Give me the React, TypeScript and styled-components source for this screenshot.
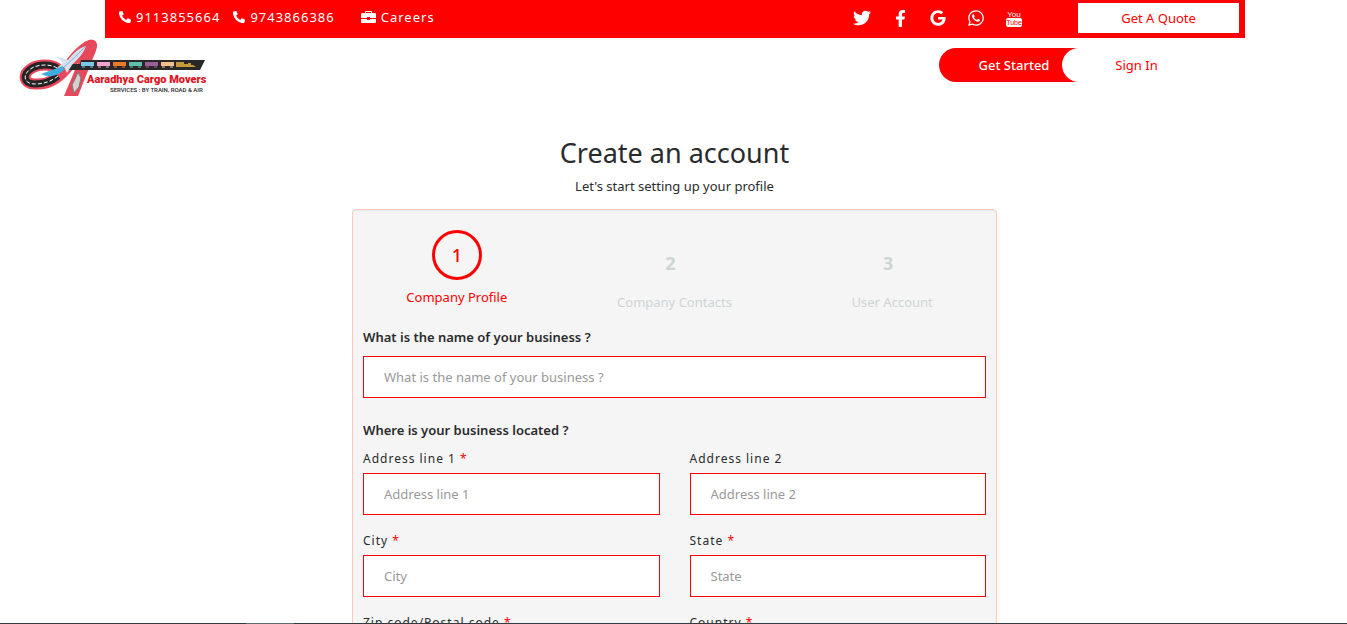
import React from "react";
import styled, { createGlobalStyle } from "styled-components";
import { FaTwitter, FaFacebookF, FaGoogle, FaWhatsapp, FaPhoneAlt } from "react-icons/fa";

const GlobalStyle = createGlobalStyle`
  * { box-sizing: border-box; }
  html { scrollbar-width: none; }
  body {
    margin: 0;
    background: #fff;
    color: #292b2c;
    font-family: "Noto Sans", "Open Sans", sans-serif;
    font-size: 13px;
    line-height: 20px;
  }
`;

const Header = styled.header`
  padding-left: 3px;
`;

const TopBar = styled.div`
  max-width: 1140px;
  height: 38px;
  margin: 0 auto;
  padding: 0 6px 0 14px;
  display: flex;
  align-items: flex-start;
  background: #f00;
`;

const Contacts = styled.nav`
  display: flex;
  flex: 1;
  padding-top: 7px;
  gap: 13px;
`;

const ContactLink = styled.a<{ $apart?: boolean }>`
  display: inline-flex;
  align-items: center;
  gap: 5px;
  margin-left: ${(p) => (p.$apart ? "13px" : "0")};
  color: #fff;
  font-size: 13px;
  letter-spacing: 1px;
  text-decoration: none;
`;

const Socials = styled.nav`
  display: flex;
  align-items: center;
  gap: 20px;
  padding-top: 8px;
  margin-right: 55px;
`;

const SocialLink = styled.a`
  display: flex;
  justify-content: center;
  width: 18px;
  height: 20px;
  align-items: center;
  color: #fff;
`;

const QuoteButton = styled.button`
  width: 161px;
  height: 30px;
  margin-top: 3px;
  border: 0;
  background: #fff;
  color: #f00;
  font: inherit;
`;

const NavRow = styled.div`
  display: flex;
  justify-content: space-between;
  align-items: flex-start;
  padding: 0 136px 0 15px;
`;

const LogoLink = styled.a`
  display: block;
  height: 62px;
`;

const AuthButtons = styled.div`
  display: flex;
  padding-top: 10px;
`;

const AuthButton = styled.button<{ $filled?: boolean }>`
  height: 34px;
  border: 0;
  font: inherit;
  width: ${(p) => (p.$filled ? "140px" : "149px")};
  padding: ${(p) => (p.$filled ? "0 0 0 10px" : "0")};
  margin-left: ${(p) => (p.$filled ? "0" : "-17px")};
  border-radius: ${(p) => (p.$filled ? "17px 0 0 17px" : "17px")};
  background: ${(p) => (p.$filled ? "#f00" : "#fff")};
  color: ${(p) => (p.$filled ? "#fff" : "#f00")};
  font-weight: ${(p) => (p.$filled ? 500 : 400)};
`;

const Main = styled.main`
  padding: 34px 0 40px 2px;
`;

const Title = styled.h1`
  margin: 0;
  font-size: 27px;
  font-weight: 400;
  line-height: 38px;
  text-align: center;
`;

const Subtitle = styled.p`
  margin: 4px 0 13px;
  text-align: center;
`;

const Card = styled.form`
  max-width: 645px;
  margin: 0 auto;
  padding: 20px 10px;
  border: 1px solid #ffc9bd;
  border-radius: 4px;
  background: #f5f5f5;
  box-shadow: inset 0 1px 1px rgba(0, 0, 0, 0.05);
`;

const Steps = styled.ol`
  display: grid;
  grid-template-columns: repeat(3, 1fr);
  list-style: none;
  height: 97px;
  margin: 0 -15px;
  padding: 0;
`;

const Step = styled.li<{ $active?: boolean }>`
  display: flex;
  flex-direction: column;
  align-items: center;
  gap: ${(p) => (p.$active ? "7px" : "4px")};
  color: ${(p) => (p.$active ? "#f00" : "#cfd4d5")};
  padding-top: ${(p) => (p.$active ? "0" : "8px")};
`;

const StepNumber = styled.span<{ $active?: boolean }>`
  display: flex;
  align-items: center;
  justify-content: center;
  width: 50px;
  height: 50px;
  padding-right: ${(p) => (p.$active ? "0" : "8px")};
  border: 3px solid ${(p) => (p.$active ? "#f00" : "transparent")};
  border-radius: 50%;
  font-size: 18px;
  font-weight: ${(p) => (p.$active ? 500 : 700)};
`;

const Section = styled.fieldset`
  margin: 0 0 22px;
  padding: 0;
  border: 0;
  min-width: 0;
`;

const Question = styled.label`
  display: block;
  font-weight: 600;
  margin-bottom: 9px;
`;

const Legend = styled.legend`
  padding: 0;
  font-weight: 600;
  margin-bottom: 9px;
`;

const FieldGrid = styled.div`
  display: grid;
  grid-template-columns: 1fr 1fr;
  gap: 16px 30px;
`;

const FieldLabel = styled.label`
  display: block;
  margin-bottom: 4px;
  font-size: 12px;
  letter-spacing: 1px;
`;

const Required = styled.span`
  color: #f00;
`;

const TextInput = styled.input`
  display: block;
  width: 100%;
  height: 42px;
  padding: 0 20px;
  border: 1px solid #f00;
  border-radius: 0;
  background: #fff;
  font: inherit;
  outline: none;
  &::placeholder {
    color: #999;
    opacity: 1;
  }
`;

const BottomEdge = styled.div`
  position: fixed;
  left: 0;
  right: 0;
  bottom: 0;
  height: 1px;
  background: linear-gradient(90deg, #343c41 246px, #60686c 246px, #60686c 294px, #343c41 294px);
`;

const BriefcaseIcon = () => (
  <svg width="15" height="13" viewBox="0 0 15 13" fill="#fff" aria-hidden="true">
    <path fillRule="evenodd" d="M4 2V1q0-1 1-1h5q1 0 1 1v1h3q1 0 1 1v4H9V6H6v1H0V3q0-1 1-1zM5 2h5V1H5z" />
    <path d="M0 8h6v1h3V8h6v3q0 1-1 1H1q-1 0-1-1z" />
  </svg>
);

const YouTubeIcon = () => (
  <svg width="16" height="19" viewBox="0 0 16 19" aria-hidden="true" fontFamily="Liberation Sans, sans-serif" textAnchor="middle">
    <text x="8" y="8" fontSize="8" fill="#fff">You</text>
    <rect x="0" y="9" width="16" height="9" rx="2" fill="#fff" />
    <text x="8" y="16" fontSize="7" fill="#f00">Tube</text>
  </svg>
);

const wagons = ["#7cc4e8", "#f2a3cf", "#ea7b2c", "#5fbfae", "#9c6095", "#f3c08b"];

const Logo = () => (
  <svg width="195" height="62" viewBox="0 0 195 62" role="img" aria-label="Aaradhya Cargo Movers" fontFamily="Roboto, sans-serif">
    <path d="M39 30C33 26 21 26 14 30C4 36 5 46 17 46C31 47 40 40 48 31C56 21 63 11 73 7" fill="none" stroke="#e8485c" strokeWidth="11" strokeLinecap="round" />
    <path d="M66 4Q80 -2 79 9Q78 14 75 20L60 58H46L62 20z" fill="#e8485c" />
    <path d="M39 30C33 26 21 26 14 30C4 36 5 46 17 46C26 46 34 43 40 38" fill="none" stroke="#252325" strokeWidth="7" />
    <path d="M39 30C33 26 21 26 14 30C4 36 5 46 17 46C26 46 34 43 40 38" fill="none" stroke="#fff" strokeWidth="1" strokeDasharray="4 2" />
    <path d="M63 22H187L182 32H47L52 26H62z" fill="#292728" />
    <path d="M68 8C60 10 55 16 50 22L38 18L45 25L36 33L46 29L49 35L54 27C60 21 66 15 68 8z" fill="#d3e2ee" />
    <path d="M68 8C61 15 54 22 46 29" fill="none" stroke="#8fb2d0" strokeWidth="1" />
    <path d="M45 28L23 36Q35 42 46 32z" fill="#3daee0" />
    <path d="M60 34L63 40L61 49L56 55L54 47L57 41z" fill="#d5cfcd" stroke="#777" strokeWidth="1" />
    {wagons.map((c, i) => (
      <g key={c}>
        <rect x={63 + i * 16} y="24" width="13" height="4" fill={c} />
        <path d={`M${64 + i * 16} 29h3m5 0h3`} stroke={c} />
      </g>
    ))}
    <path d="M158 24h8v2h4v-1h3v2h2l3 2h-20z" fill="#c69a3c" />
    <text x="69" y="45" fontWeight="900" fontSize="11" fill="#e0151f">Aaradhya Cargo Movers</text>
    <text x="92" y="54" fontWeight="500" fontSize="6" fill="#292728">SERVICES : BY TRAIN, ROAD &amp; AIR</text>
  </svg>
);

const fields = [
  { id: "address1", label: "Address line 1", required: true, hint: "Address line 1" },
  { id: "address2", label: "Address line 2", required: false, hint: "Address line 2" },
  { id: "city", label: "City", required: true, hint: "City" },
  { id: "state", label: "State", required: true, hint: "State" },
  { id: "zip", label: "Zip code/Postal code", required: true },
  { id: "country", label: "Country", required: true },
];

const steps = ["Company Profile", "Company Contacts", "User Account"];

export default function App() {
  return (
    <>
      <GlobalStyle />
      <Header>
        <TopBar>
          <Contacts>
            <ContactLink href="tel:9113855664"><FaPhoneAlt size={12} />9113855664</ContactLink>
            <ContactLink href="tel:9743866386"><FaPhoneAlt size={12} />9743866386</ContactLink>
            <ContactLink href="#careers" $apart><BriefcaseIcon />Careers</ContactLink>
          </Contacts>
          <Socials>
            <SocialLink href="#twitter" aria-label="Twitter"><FaTwitter size={18} /></SocialLink>
            <SocialLink href="#facebook" aria-label="Facebook"><FaFacebookF size={17} /></SocialLink>
            <SocialLink href="#google" aria-label="Google"><FaGoogle size={16} /></SocialLink>
            <SocialLink href="#whatsapp" aria-label="WhatsApp"><FaWhatsapp size={18} /></SocialLink>
            <SocialLink href="#youtube" aria-label="YouTube"><YouTubeIcon /></SocialLink>
          </Socials>
          <QuoteButton type="button">Get A Quote</QuoteButton>
        </TopBar>
        <NavRow>
          <LogoLink href="#home"><Logo /></LogoLink>
          <AuthButtons>
            <AuthButton type="button" $filled>Get Started</AuthButton>
            <AuthButton type="button">Sign In</AuthButton>
          </AuthButtons>
        </NavRow>
      </Header>
      <Main>
        <Title>Create an account</Title>
        <Subtitle>Let's start setting up your profile</Subtitle>
        <Card>
          <Steps>
            {steps.map((name, i) => (
              <Step key={name} $active={i === 0}>
                <StepNumber $active={i === 0}>{i + 1}</StepNumber>
                {name}
              </Step>
            ))}
          </Steps>
          <Section>
            <Question htmlFor="business">What is the name of your business ?</Question>
            <TextInput id="business" placeholder="What is the name of your business ?" />
          </Section>
          <Section>
            <Legend>Where is your business located ?</Legend>
            <FieldGrid>
              {fields.map((f) => (
                <div key={f.id}>
                  <FieldLabel htmlFor={f.id}>
                    {f.label} {f.required && <Required>*</Required>}
                  </FieldLabel>
                  <TextInput id={f.id} placeholder={f.hint} />
                </div>
              ))}
            </FieldGrid>
          </Section>
        </Card>
      </Main>
      <BottomEdge />
    </>
  );
}
